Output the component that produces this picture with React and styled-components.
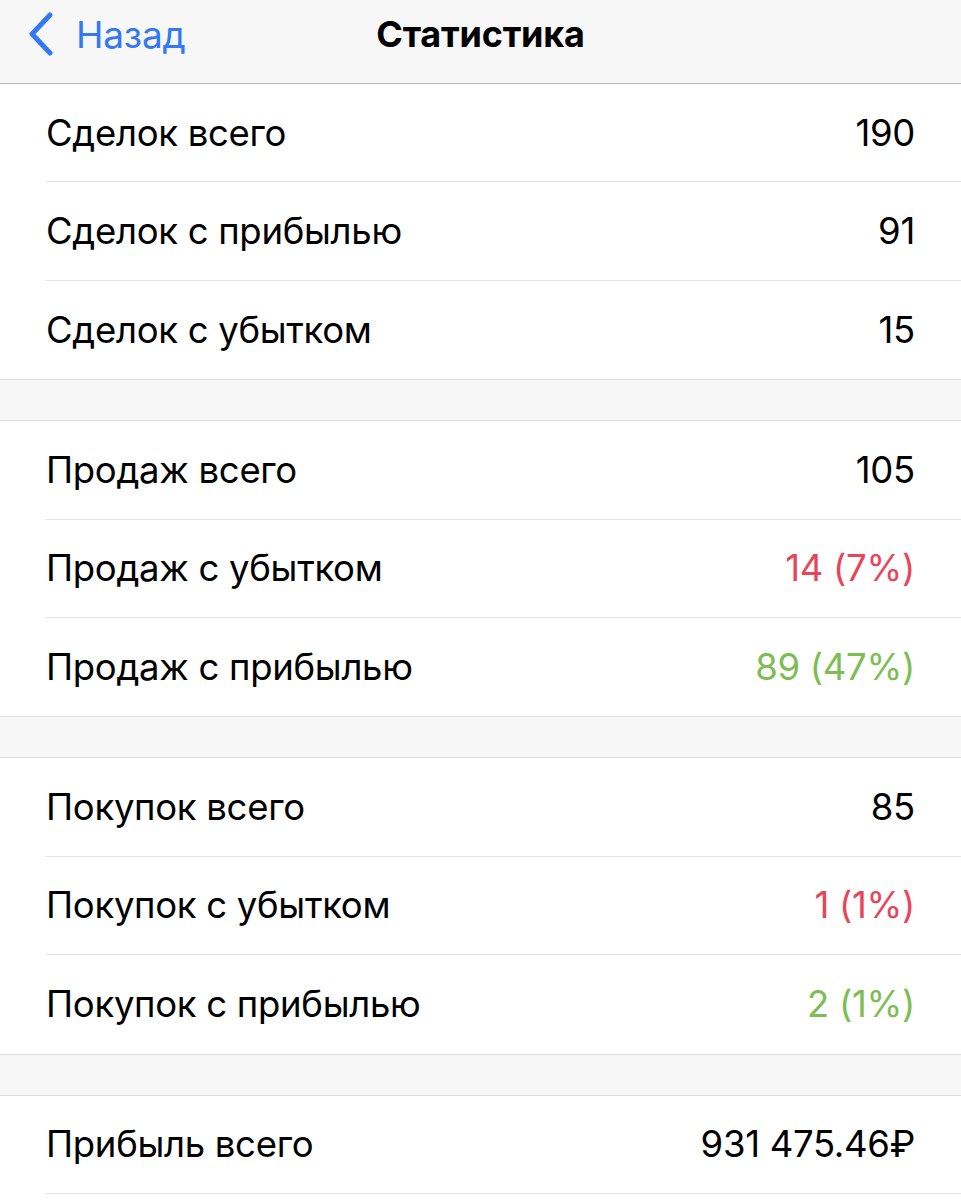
import React from "react";
import styled, { createGlobalStyle } from "styled-components";

const Global = createGlobalStyle`
  html, body { margin: 0; padding: 0; background: #ffffff; }
  body { font-family: Inter, "Noto Sans", "Liberation Sans", sans-serif; -webkit-font-smoothing: antialiased; }
`;

const Page = styled.div`
  width: 961px;
  min-height: 1200px;
  background: #ffffff;
  display: flex;
  flex-direction: column;
`;

const NavBar = styled.header`
  height: 84px;
  box-sizing: border-box;
  padding-bottom: 15px;
  background: #f7f7f7;
  border-bottom: 1px solid #b3b3b3;
  display: grid;
  grid-template-columns: 1fr auto 1fr;
  align-items: center;
`;

const BackButton = styled.button`
  justify-self: start;
  display: flex;
  align-items: center;
  gap: 22px;
  padding: 0 0 0 28px;
  border: none;
  background: none;
  color: #3478f6;
  font-family: inherit;
  font-size: 37px;
  font-weight: 400;
  letter-spacing: -0.2px;
  cursor: pointer;
`;

const Title = styled.h1`
  margin: 0;
  font-size: 36px;
  font-weight: 700;
  color: #000;
  letter-spacing: -0.2px;
`;

const Group = styled.section`
  background: #ffffff;
  display: flex;
  flex-direction: column;
`;

const Gap = styled.div`
  height: 40px;
  background: #f7f7f7;
  border-top: 1px solid #e0e0e0;
  border-bottom: 1px solid #e0e0e0;
`;

const Row = styled.div`
  height: 98.4px;
  box-sizing: border-box;
  margin-left: 46px;
  padding-right: 46px;
  display: flex;
  align-items: center;
  justify-content: space-between;
  border-bottom: ${(p) => (p.$last ? "none" : "1px solid #e3e3e3")};
  font-size: 36.5px;
  letter-spacing: -0.3px;
  color: #000;
`;

const Label = styled.span``;

const colors = { red: "#e8455b", green: "#7dbd54", default: "#000" };

const Value = styled.span`
  color: ${(p) => colors[p.$tone || "default"]};
`;

const groups = [
  [
    ["Сделок всего", "190"],
    ["Сделок с прибылью", "91"],
    ["Сделок с убытком", "15"],
  ],
  [
    ["Продаж всего", "105"],
    ["Продаж с убытком", "14 (7%)", "red"],
    ["Продаж с прибылью", "89 (47%)", "green"],
  ],
  [
    ["Покупок всего", "85"],
    ["Покупок с убытком", "1 (1%)", "red"],
    ["Покупок с прибылью", "2 (1%)", "green"],
  ],
];

export default function App() {
  return (
    <Page>
      <Global />
      <NavBar>
        <BackButton>
          <svg width="26" height="44" viewBox="0 0 26 44" fill="none">
            <path d="M22 3 L4 22 L22 41" stroke="#3478f6" strokeWidth="5" strokeLinecap="round" strokeLinejoin="round" />
          </svg>
          Назад
        </BackButton>
        <Title>Статистика</Title>
        <div />
      </NavBar>
      {groups.map((g, gi) => (
        <React.Fragment key={gi}>
          <Group>
            {g.map(([l, v, tone], i) => (
              <Row key={l} $last={i === g.length - 1}>
                <Label>{l}</Label>
                <Value $tone={tone}>{v}</Value>
              </Row>
            ))}
          </Group>
          <Gap />
        </React.Fragment>
      ))}
      <Group>
        <Row>
          <Label>Прибыль всего</Label>
          <Value>931 475.46₽</Value>
        </Row>
      </Group>
    </Page>
  );
}
